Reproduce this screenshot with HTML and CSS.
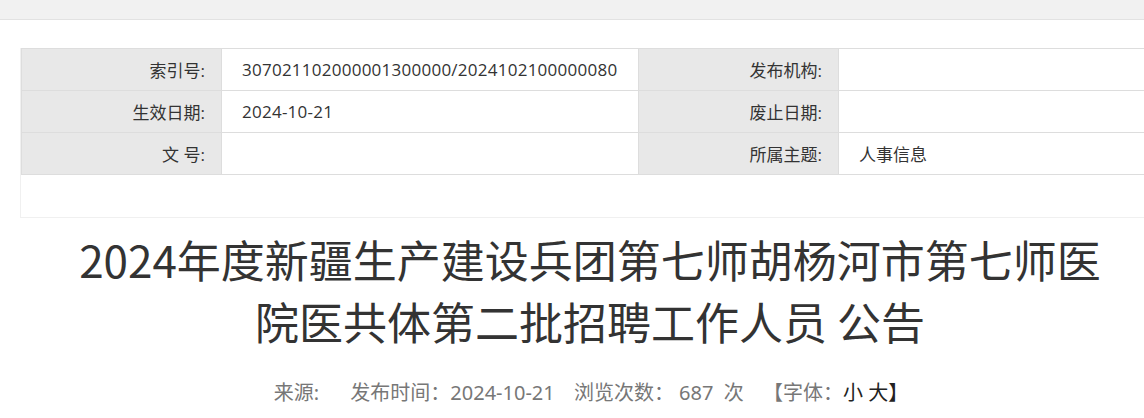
FILE: index.html
```html
<!DOCTYPE html>
<html lang="zh-CN">
<head>
<meta charset="utf-8">
<title>公告</title>
<link rel="stylesheet" href="styles.css">
</head>
<body>
<div class="topbar"></div>
<div class="page">
  <div class="info-box">
    <table class="info">
      <colgroup>
        <col class="c-label">
        <col class="c-value">
        <col class="c-label">
        <col class="c-rest">
      </colgroup>
      <tr>
        <th>索引号:</th>
        <td class="num">307021102000001300000/2024102100000080</td>
        <th>发布机构:</th>
        <td></td>
      </tr>
      <tr>
        <th>生效日期:</th>
        <td class="num">2024-10-21</td>
        <th>废止日期:</th>
        <td></td>
      </tr>
      <tr>
        <th>文&nbsp;号:</th>
        <td></td>
        <th>所属主题:</th>
        <td>人事信息</td>
      </tr>
    </table>
  </div>
  <h1 class="title">2024年度新疆生产建设兵团第七师胡杨河市第七师医院医共体第二批招聘工作人员 公告</h1>
  <div class="meta">
    <span class="item first">来源:</span>
    <span class="item">发布时间：2024-10-21</span>
    <span class="item">浏览次数： 687&nbsp;&nbsp;次</span>
    <span class="item">【字体：<span class="size">小</span> <span class="size">大</span><span class="size">】</span></span>
  </div>
</div>
</body>
</html>
```
FILE: styles.css
```css
html, body {
  margin: 0;
  padding: 0;
  overflow: hidden;
  background: #ffffff;
}
body {
  font-family: "Open Sans", "Noto Sans CJK SC", sans-serif;
  color: #333333;
  width: 1144px;
}
.topbar {
  height: 19px;
  background: #f1f1f1;
  border-bottom: 1px solid #e2e2e2;
}
.page {
  width: 1140px;
  margin: 28px 0 0 20px;
}
.info-box {
  border: 1px solid #f0f0f0;
  border-top: none;
  padding-bottom: 42px;
}
.info {
  width: 100%;
  border-collapse: collapse;
  font-size: 17px;
  table-layout: fixed;
}
.c-label { width: 200px; }
.c-value { width: 417px; }
.info th, .info td {
  height: 41px;
  border: 1px solid #dddddd;
  padding: 0;
  font-weight: normal;
  color: #333333;
  white-space: nowrap;
}
.info th {
  background: #e8e8e8;
  text-align: right;
  padding-right: 16px;
}
.info td {
  text-align: left;
  padding-left: 20px;
}
.info td.num {
  letter-spacing: 0.25px;
}
.title {
  margin: 10px 0 0 0;
  font-family: "Noto Sans CJK SC", sans-serif;
  font-size: 44px;
  line-height: 62px;
  font-weight: normal;
  text-align: center;
  color: #333333;
  padding: 0 50px;
}
.meta {
  margin-top: 26px;
  text-align: center;
  font-size: 20px;
  line-height: 30px;
  color: #777777;
  font-family: "Noto Sans", "Noto Sans CJK SC", sans-serif;
  white-space: nowrap;
  padding-left: 2px;
}
.meta .item {
  margin: 0 7px;
}
.meta .item.first {
  margin-right: 19px;
}
.meta .size {
  color: #222222;
}
```
